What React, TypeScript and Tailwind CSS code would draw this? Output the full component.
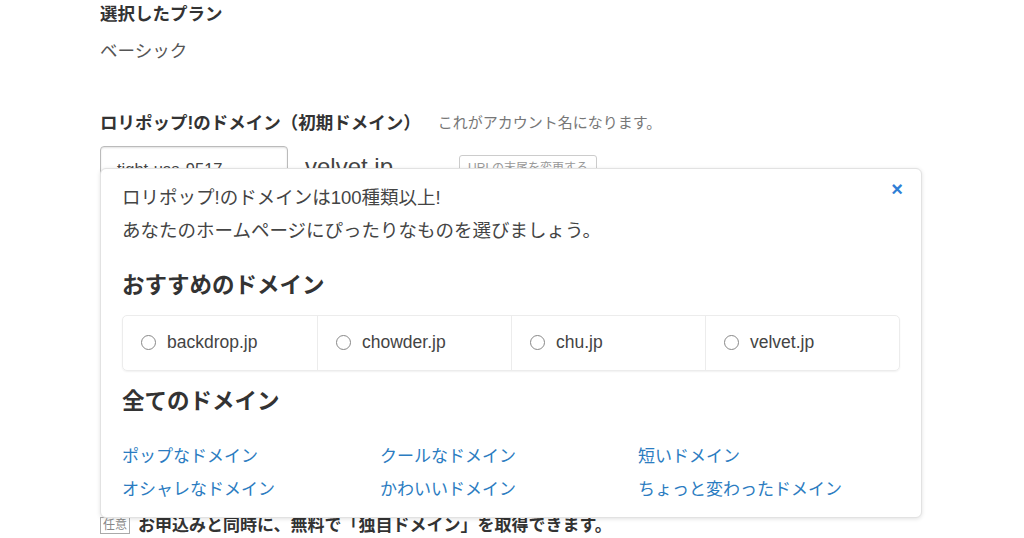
import { useState } from "react";

const recommended = ["backdrop.jp", "chowder.jp", "chu.jp", "velvet.jp"];

const categories = [
  "ポップなドメイン",
  "クールなドメイン",
  "短いドメイン",
  "オシャレなドメイン",
  "かわいいドメイン",
  "ちょっと変わったドメイン",
];

function App() {
  const [selected, setSelected] = useState<string | null>(null);
  const [open, setOpen] = useState(true);

  return (
    <main
      className="w-[1024px] h-[538px] overflow-hidden bg-white pl-[100px] text-[#333]"
      style={{ fontFamily: '"Liberation Sans", "Noto Sans CJK JP", sans-serif' }}
    >
      <h2 className="pt-[3px] text-[17.5px] leading-[22px] font-bold text-[#333]">選択したプラン</h2>
      <p className="mt-[15px] text-[17.5px] leading-[22px] text-[#555]">ベーシック</p>

      <div className="mt-[50px] flex items-center">
        <h2 className="text-[17.5px] leading-[22px] font-bold text-[#333]">
          ロリポップ!のドメイン（初期ドメイン）
        </h2>
        <span className="ml-[17px] text-[15px] text-[#777]">これがアカウント名になります。</span>
      </div>

      <div className="relative mt-[11px]">
        <div className="flex items-start">
          <div className="w-[188px] h-[44px] rounded-[4px] border border-[#bbb] shadow-[inset_0_1px_2px_rgba(0,0,0,0.12)] pl-[16px] pt-[10px] text-[16.5px] text-[#444]">
            tight-usa-9517
          </div>
          <span className="ml-[17px] mt-[3px] text-[24px] text-[#444]">velvet.jp</span>
          <span className="ml-[66px] mt-[9px] h-[24px] rounded-[3px] border border-[#ccc] px-[8px] pt-[3px] text-[12px] text-[#999]">
            URLの末尾を変更する
          </span>
        </div>

        {open && (
          <div className="absolute left-0 top-[22px] w-[822px] h-[350px] rounded-[6px] border border-[#e2e2e2] bg-white shadow-[0_1px_4px_rgba(0,0,0,0.12)] pl-[21px] pr-[21px] pt-[14px] z-10">
            <button
              className="absolute right-[18px] top-[10px] text-[20px] font-bold leading-[20px] text-[#2f7fd6]"
              onClick={() => setOpen(false)}
            >
              ×
            </button>
            <p className="text-[18.5px] leading-[30px] text-[#444]">ロリポップ!のドメインは100種類以上!</p>
            <p className="mt-[3px] text-[18.5px] leading-[30px] text-[#444]">
              あなたのホームページにぴったりなものを選びましょう。
            </p>
            <h3 className="mt-[25px] text-[22.5px] leading-[30px] font-bold text-[#333]">おすすめのドメイン</h3>
            <div className="mt-[14px] grid grid-cols-4 h-[56px] rounded-[5px] border border-[#ececec] shadow-[0_1px_2px_rgba(0,0,0,0.06)]">
              {recommended.map((d, i) => (
                <label
                  key={d}
                  className={`flex items-center pl-[18px] cursor-pointer ${i > 0 ? "border-l border-[#ececec]" : ""}`}
                  onClick={() => setSelected(d)}
                >
                  <span className="w-[15px] h-[15px] rounded-full border border-[#888] flex items-center justify-center">
                    {selected === d && <span className="w-[7px] h-[7px] rounded-full bg-[#2f7fd6]" />}
                  </span>
                  <span className="ml-[11px] text-[17.5px] text-[#444]">{d}</span>
                </label>
              ))}
            </div>
            <h3 className="mt-[16px] text-[22.5px] leading-[30px] font-bold text-[#333]">全てのドメイン</h3>
            <div className="mt-[27px] grid grid-cols-[258px_258px_1fr] gap-y-[8px]">
              {categories.map((c) => (
                <a key={c} href="#" className="text-[17px] leading-[25px] text-[#2b7cc1]">
                  {c}
                </a>
              ))}
            </div>
          </div>
        )}

        <div className="mt-[323px] flex items-center">
          <span className="border border-[#aaa] px-[2px] text-[12px] leading-[15px] text-[#888]">任意</span>
          <span className="ml-[8px] text-[17px] font-bold text-[#333]">
            お申込みと同時に、無料で「独自ドメイン」を取得できます。
          </span>
        </div>
      </div>
    </main>
  );
}

export default App;
